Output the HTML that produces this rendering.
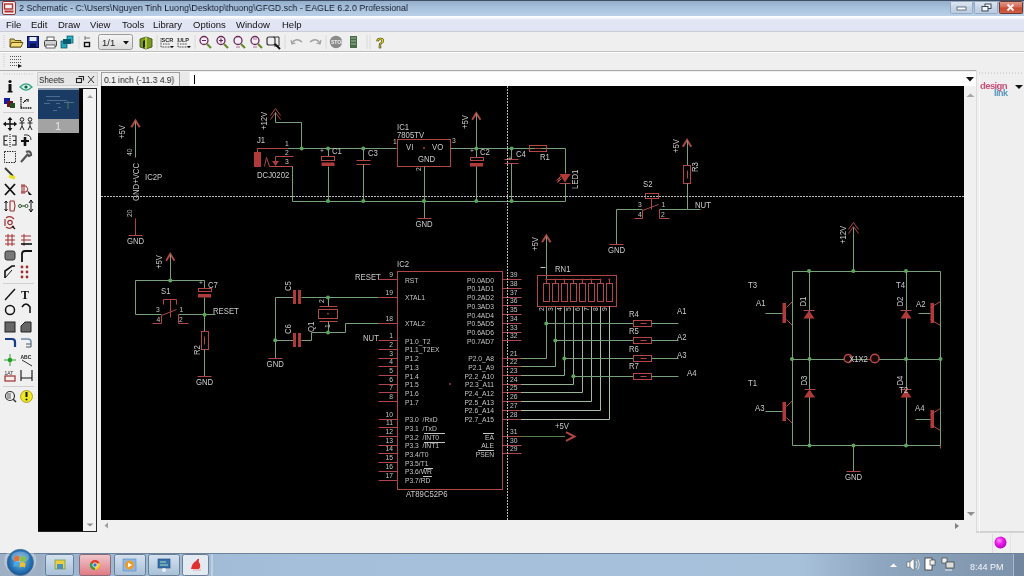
<!DOCTYPE html>
<html><head><meta charset="utf-8">
<style>
*{margin:0;padding:0;box-sizing:border-box}
html,body{width:1024px;height:576px;overflow:hidden;background:#f0f0f0;font-family:"Liberation Sans",sans-serif;position:relative}
.a{position:absolute;will-change:transform}
#title{left:0;top:0;width:1024px;height:16px;background:linear-gradient(#3e4e64 0px,#3e4e64 1px,#94aecb 1px,#a9c2dc 8px,#b8cfe7 16px);}
#title .t{left:19px;top:2px;font-size:9.5px;color:#101828;white-space:nowrap;transform:scaleX(0.93);transform-origin:0 0}
#menu{left:0;top:16px;width:1024px;height:16px;background:linear-gradient(#ffffff 0px,#f6f8fd 2px,#e2e6f4 4px,#dfe3f4 15px);border-bottom:1px solid #c8ccd4}
#menu span{position:absolute;top:3px;font-size:9.5px;color:#111}
#tb1{left:0;top:32px;width:1024px;height:20px;background:#efefef;border-bottom:1px solid #c0c0c0;box-shadow:0 1px 0 #fff}
#tb2{left:0;top:53px;width:1024px;height:18px;background:#efefef;border-bottom:1px solid #a8a8a8}
#sch{left:101px;top:86px;width:863px;height:434px;background:#000;overflow:hidden}
#task{left:0;top:553px;width:1024px;height:23px;background:linear-gradient(90deg,#8aa3bd 0px,#9bb5d0 40px,#a5bfda 300px,#a8c1db 800px,#8ea6bf 880px,#7e94ac 1010px);border-top:1px solid #6d839b}
</style></head><body>
<div id="title" class="a"><span class="a t">2 Schematic - C:\Users\Nguyen Tinh Luong\Desktop\thuong\GFGD.sch - EAGLE 6.2.0 Professional</span></div>
<div id="menu" class="a">
<span style="left:6px">File</span><span style="left:31px">Edit</span><span style="left:58px">Draw</span><span style="left:90px">View</span><span style="left:122px">Tools</span><span style="left:153px">Library</span><span style="left:193px">Options</span><span style="left:236px">Window</span><span style="left:282px">Help</span>
</div>
<div id="tb1" class="a"></div>
<div id="tb2" class="a"></div>

<!-- title buttons -->
<svg class="a" style="left:940px;top:0" width="84" height="16" viewBox="940 0 84 16">
<defs>
<linearGradient id="bt" x1="0" y1="0" x2="0" y2="1"><stop offset="0" stop-color="#dfe8f2"/><stop offset="0.5" stop-color="#c6d5e6"/><stop offset="1" stop-color="#b8cbe0"/></linearGradient>
<linearGradient id="cl" x1="0" y1="0" x2="0" y2="1"><stop offset="0" stop-color="#e4a090"/><stop offset="0.45" stop-color="#d46a55"/><stop offset="0.55" stop-color="#c84a32"/><stop offset="1" stop-color="#d06048"/></linearGradient>
</defs>
<rect x="950.5" y="1.5" width="22" height="12" rx="1" fill="url(#bt)" stroke="#98aac0"/>
<rect x="957" y="7" width="9" height="3" fill="#fff" stroke="#4a5666" stroke-width="0.8"/>
<rect x="974.5" y="1.5" width="23" height="12" rx="1" fill="url(#bt)" stroke="#98aac0"/>
<rect x="985" y="4" width="6" height="4.5" fill="#f4f8fc" stroke="#3a4656" stroke-width="1"/>
<rect x="982" y="6.5" width="6" height="4.5" fill="#f4f8fc" stroke="#3a4656" stroke-width="1"/>
<rect x="999.5" y="1.5" width="23" height="12" rx="1" fill="url(#cl)" stroke="#6a3a30"/>
<path d="M1007.5,4.5 L1013.5,10.5 M1013.5,4.5 L1007.5,10.5" stroke="#f8f0f0" stroke-width="2"/>
</svg>
<!-- app icon -->
<svg class="a" style="left:2px;top:1px" width="14" height="14" viewBox="0 0 14 14">
<rect x="0.5" y="0.5" width="13" height="13" rx="1.5" fill="#f4f0f0" stroke="#9a3030"/>
<rect x="2.5" y="3" width="8" height="5" fill="none" stroke="#b03030" stroke-width="1.4"/>
<rect x="2.5" y="9.5" width="9" height="2" fill="#b03030"/>
</svg>

<!-- toolbar 1 icons -->
<svg class="a" style="left:0;top:32px" width="400" height="20" viewBox="0 32 400 20">
<path d="M4,35 L4,49" stroke="#c8c8c8" stroke-dasharray="1,1"/>
<!-- folder -->
<path d="M10,39 L14,39 L15,40.5 L21,40.5 L21,47 L10,47 Z" fill="#e0c75a" stroke="#5a4a10" stroke-width="0.9"/>
<path d="M11.5,42.5 L23,42.5 L21,47 L10,47 Z" fill="#f2dd78" stroke="#5a4a10" stroke-width="0.9"/>
<!-- save -->
<rect x="27.5" y="36.5" width="11" height="11" fill="#1b2c9a" stroke="#0c1250"/>
<rect x="29.5" y="37" width="7" height="4" fill="#e8eef8"/>
<rect x="30" y="43.5" width="6" height="4" fill="#0c1250"/>
<!-- print -->
<rect x="44.5" y="40.5" width="12" height="6" rx="1" fill="#cfcfcf" stroke="#404040"/>
<rect x="47" y="37" width="7" height="3.5" fill="#fff" stroke="#404040" stroke-width="0.8"/>
<rect x="46" y="45" width="9" height="3" fill="#fff" stroke="#404040" stroke-width="0.8"/>
<!-- cyan -->
<rect x="61" y="41" width="6" height="7" fill="#20a8b8" stroke="#0a4a60" stroke-width="0.7"/>
<rect x="67" y="36" width="6" height="7" fill="#20b8c8" stroke="#0a4a60" stroke-width="0.7"/>
<rect x="63" y="39" width="8" height="5" fill="#0a5a70"/>
<path d="M79,36 L79,49" stroke="#d8d8d8"/>
<!-- small chip -->
<path d="M85,36 L85,40 M85,38 L90,38" stroke="#555" stroke-width="0.8"/>
<rect x="84.5" y="42.5" width="5" height="4" fill="none" stroke="#111" stroke-width="1.4"/>
<!-- dropdown 1/1 -->
<defs><linearGradient id="dd" x1="0" y1="0" x2="0" y2="1"><stop offset="0" stop-color="#f6f6f6"/><stop offset="1" stop-color="#dadada"/></linearGradient></defs><rect x="98.5" y="34.5" width="34" height="15" rx="2" fill="url(#dd)" stroke="#9a9a9a"/>
<text x="102" y="46" font-size="9.5" fill="#222" font-family="Liberation Sans">1/1</text>
<path d="M123,41 L129,41 L126,44.5 Z" fill="#111"/>
<!-- book -->
<path d="M140,39 L146,37 L152,39 L152,47 L146,49 L140,47 Z" fill="#7a9a20" stroke="#3a4a10" stroke-width="0.8"/>
<path d="M146,37 L146,49" stroke="#c8d840" stroke-width="1.5"/>
<path d="M143,41 L145,40 L145,47 L143,48 Z" fill="#222"/>
<path d="M157,35 L157,49" stroke="#d8d8d8"/>
<!-- SCR ULP -->
<g font-family="Liberation Sans" font-size="5.5" font-weight="bold" fill="#222">
<text x="161.5" y="41.5">SCR</text><text x="178" y="41.5">ULP</text></g>
<path d="M161,38 L161,47 L173,47 M163,44 L170,44 M178,38 L178,47 L190,47 M180,44 L187,44" stroke="#333" stroke-width="0.9" fill="none" stroke-dasharray="1,0.6"/>
<path d="M170,46 L174,46 L172,48 Z M187,46 L191,46 L189,48 Z" fill="#111"/>
<path d="M195,35 L195,49" stroke="#d8d8d8"/>
<!-- magnifiers -->
<g fill="#f4eef4" stroke="#6a2a5a" stroke-width="1.3">
<circle cx="204" cy="40.5" r="4"/><circle cx="221" cy="40.5" r="4"/><circle cx="238" cy="40.5" r="4"/><circle cx="255" cy="40.5" r="4"/>
</g>
<g stroke="#6a8a30" stroke-width="2.2">
<path d="M207,44 L211,48 M224,44 L228,48 M241,44 L245,48 M258,44 L262,48"/></g>
<path d="M202,40.5 L206,40.5 M219,40.5 L223,40.5 M221,38.5 L221,42.5" stroke="#6a2a5a" stroke-width="1.2"/>
<path d="M236,47 L240,47 M253,47 L257,47 M253,39 L257,39" stroke="#b070a0" stroke-width="1"/>
<rect x="267" y="37" width="8" height="8" rx="2" fill="#eee" stroke="#333" stroke-width="1.2"/>
<path d="M273,37 L279,37 L279,46 L274,46" fill="none" stroke="#333" stroke-width="1"/>
<path d="M275,44 L280,49" stroke="#111" stroke-width="2"/>
<path d="M285,35 L285,49" stroke="#d8d8d8"/>
<!-- undo redo -->
<path d="M292,43 Q296,37 302,42" fill="none" stroke="#a0a0a0" stroke-width="1.6"/>
<path d="M291,40 L292,44 L295.5,43" fill="none" stroke="#a0a0a0" stroke-width="1.2"/>
<path d="M320,43 Q316,37 310,42" fill="none" stroke="#a0a0a0" stroke-width="1.6"/>
<path d="M321,40 L320,44 L316.5,43" fill="none" stroke="#a0a0a0" stroke-width="1.2"/>
<path d="M326,35 L326,49" stroke="#d8d8d8"/>
<!-- stop -->
<circle cx="336" cy="42" r="6.2" fill="#8a8a8a"/>
<text x="331" y="44" font-size="5" fill="#eee" font-family="Liberation Sans" font-weight="bold">STOP</text>
<rect x="350" y="36" width="7" height="12" fill="#4a6a4a"/>
<path d="M351,38 L356,38 M351,41 L356,41 M351,44 L356,44" stroke="#9aba9a" stroke-width="1"/>
<path d="M367,35 L367,49 M370,35 L370,49" stroke="#d8d8d8"/>
<text x="376" y="48" font-size="14" font-weight="bold" fill="#e8e020" stroke="#202000" stroke-width="0.5" font-family="Liberation Sans">?</text>
</svg>
<!-- toolbar 2 -->
<svg class="a" style="left:0;top:52px" width="40" height="18" viewBox="0 52 40 18">
<path d="M4,54 L4,68" stroke="#c8c8c8" stroke-dasharray="1,1"/>
<g fill="#555"><path d="M10,56 h1v1h-1z M12,56 h1v1h-1z M14,56 h1v1h-1z M16,56 h1v1h-1z M18,56 h1v1h-1z M20,56 h1v1h-1z
M10,59 h1v1h-1z M12,59 h1v1h-1z M14,59 h1v1h-1z M16,59 h1v1h-1z M18,59 h1v1h-1z M20,59 h1v1h-1z
M10,62 h1v1h-1z M12,62 h1v1h-1z M14,62 h1v1h-1z M16,62 h1v1h-1z M18,62 h1v1h-1z M20,62 h1v1h-1z
M10,65 h1v1h-1z M12,65 h1v1h-1z M14,65 h1v1h-1z M16,65 h1v1h-1z M18,65 h1v1h-1z"/></g>
<path d="M18,64 L22,66 L18,68 Z" fill="#111"/>
</svg>


<!-- sheets panel -->
<div class="a" style="left:37px;top:72px;width:61px;height:14px;background:#e6e6e6;border:1px solid #d0d0d0"></div>
<span class="a" style="left:39px;top:74px;font-size:9.5px;color:#222;transform:scaleX(0.85);transform-origin:0 0">Sheets</span>
<div class="a" style="left:38px;top:88px;width:59px;height:444px;background:#000;border:1px solid #222;border-left:none"></div>
<div class="a" style="left:38px;top:88px;width:41px;height:31px;background:#1a3b63;border-top:2px solid #8a9aaa"></div>
<div class="a" style="left:38px;top:119px;width:41px;height:14px;background:#a3a3a3"></div>
<span class="a" style="left:55px;top:120px;font-size:11px;color:#e4e4e4">1</span>
<div class="a" style="left:83px;top:89px;width:13px;height:442px;background:#f2f2f2"></div>


<!-- left toolbar -->
<svg class="a" style="left:0;top:70px" width="37" height="340" viewBox="0 70 37 340">
<path d="M4,74 L34,74" stroke="#c4c4c4" stroke-dasharray="1,1.5"/>
<!-- r1 -->
<rect x="8.5" y="84" width="3" height="8" fill="#111"/><circle cx="10" cy="81.5" r="1.6" fill="#111"/><rect x="7.5" y="91" width="5" height="1.5" fill="#111"/>
<path d="M20,87 Q26,81 32,87 Q26,93 20,87 Z" fill="#d8f0e8" stroke="#30a080" stroke-width="1.2"/><circle cx="26" cy="87" r="1.6" fill="#106040"/>
<!-- r2 -->
<rect x="4" y="98" width="6" height="6" fill="#1a1aa0"/><rect x="7" y="101" width="6" height="6" fill="#6a1020"/><rect x="10" y="103" width="5" height="5" fill="#205020"/>
<path d="M21,97 L21,108 L32,108" fill="none" stroke="#111" stroke-width="1.4" stroke-dasharray="1.2,0.6"/>
<text x="24" y="104" font-size="6" fill="#111" font-family="Liberation Sans" font-weight="bold">⁶⁰</text>
<path d="M23,103 L27,99" stroke="#111"/>
<path d="M3,112.5 L34,112.5" stroke="#d0d0d0"/>
<!-- r3 move / group -->
<path d="M10,118 L10,130 M4,124 L16,124" stroke="#111" stroke-width="1.4"/>
<path d="M8,120 L10,117.5 L12,120 M8,128 L10,130.5 L12,128 M6,122 L3.5,124 L6,126 M14,122 L16.5,124 L14,126" fill="#111" stroke="#111" stroke-width="1"/>
<g stroke="#222" stroke-width="1" fill="none"><circle cx="22" cy="119.5" r="1.8"/><circle cx="30" cy="119.5" r="1.8"/>
<path d="M22,121.5 L22,126 M19.5,123 L24.5,123 M20,130 L22,126 L24,130 M30,121.5 L30,126 M27.5,123 L32.5,123 M28,130 L30,126 L32,130"/></g>
<!-- r4 mirror / rotate -->
<g stroke="#222" stroke-width="1.1" fill="none"><path d="M8,136 L4,136 L4,145 L8,145 M4,140.5 L7,140.5 M12,136 L16,136 L16,145 L12,145 M13,140.5 L16,140.5"/><path d="M10,134 L10,147" stroke-dasharray="1,1"/></g>
<path d="M25,137 L25,146" stroke="#111" stroke-width="2.6"/><path d="M21,141 L29,141" stroke="#111" stroke-width="2"/>
<path d="M24,135 Q31,134 31,140" fill="none" stroke="#333" stroke-width="1"/>
<!-- r5 group / wrench -->
<rect x="4.5" y="151.5" width="11" height="11" fill="none" stroke="#222" stroke-dasharray="1.5,1"/>
<path d="M21,162 L28,154 M26,152 Q31,150 31,155 L29,156 L27,154" fill="none" stroke="#555" stroke-width="2.2"/>
<!-- r6 pen -->
<path d="M5,168 L13,176" stroke="#333" stroke-width="1.8"/><path d="M9,176 L15,178" stroke="#e8e020" stroke-width="3"/>
<!-- r7 -->
<path d="M5,184 L15,195 M15,184 L5,195" stroke="#111" stroke-width="1.8"/>
<g stroke="#a03030" stroke-width="1" fill="none"><path d="M21,186 L26,186 L28,189 L26,192 L21,192 M22,184 L22,194 M24,184 L24,194"/></g>
<path d="M27,190 L32,195 L29,195 Z" fill="#111"/>
<!-- r8 -->
<path d="M6,201 L6,211 M4.5,203 L6,201 L7.5,203 M4.5,209 L6,211 L7.5,209" stroke="#111" stroke-width="1" fill="none"/>
<path d="M10,201 L14,201 L15,206 L14,211 L10,211 M10,201 L10,211" stroke="#a03030" stroke-width="1.1" fill="none"/>
<circle cx="20" cy="206" r="1.5" fill="none" stroke="#306030"/><path d="M21.5,206 L25,206" stroke="#333"/><circle cx="26.5" cy="206" r="1.5" fill="none" stroke="#306030"/><path d="M31,200 L31,212 M29,203 L31,200 L33,203 M29,209 L31,212 L33,209" stroke="#111" fill="none"/>
<!-- r9 -->
<g stroke="#a03030" stroke-width="1.2" fill="none"><path d="M6,218 Q10,215 14,219 M6,227 Q10,230 14,226 M5,219 L5,226"/><circle cx="10" cy="222.5" r="2.2"/></g>
<path d="M12,226 L15,229" stroke="#111" stroke-width="1.2"/>
<!-- r10 -->
<g stroke="#a03030" stroke-width="1" fill="none"><path d="M5,236 L15,236 M5,240 L15,240 M5,244 L15,244 M8,234 L8,246 M12,234 L12,246"/></g>
<g stroke="#a03030" stroke-width="1" fill="none"><path d="M21,236 L31,236 M21,240 L31,240 M24,234 L24,246"/></g><path d="M21,244 L32,244" stroke="#111" stroke-width="1.6"/>
<!-- r11 -->
<rect x="5" y="251" width="10" height="9" rx="2" fill="#777" stroke="#333"/>
<path d="M22,262 L22,254 Q22,251 25,251 L32,251" fill="none" stroke="#111" stroke-width="1.8"/>
<!-- r12 -->
<path d="M5,278 L5,271 L12,266 L15,266" fill="none" stroke="#111" stroke-width="1.6"/><path d="M5,278 L12,270" stroke="#111"/>
<g fill="#a03030"><circle cx="22" cy="267" r="1.4"/><circle cx="27" cy="267" r="1.4"/><circle cx="22" cy="272" r="1.4"/><circle cx="27" cy="272" r="1.4"/><circle cx="22" cy="277" r="1.4"/><circle cx="27" cy="277" r="1.4"/></g>
<path d="M3,283.5 L34,283.5" stroke="#d0d0d0"/>
<!-- r13 -->
<path d="M5,300 L15,289" stroke="#111" stroke-width="1.4"/>
<text x="21" y="299" font-size="12" font-family="Liberation Serif" fill="#111" font-weight="bold">T</text>
<!-- r14 -->
<circle cx="10" cy="310" r="4.5" fill="none" stroke="#111" stroke-width="1.5"/>
<path d="M22,307 Q26,301 30,307 L30,313" fill="none" stroke="#111" stroke-width="1.5"/>
<!-- r15 -->
<rect x="5" y="322" width="10" height="10" fill="#666" stroke="#222"/>
<path d="M21,332 L21,326 L25,322 L31,322 L31,332 Z" fill="#666" stroke="#222"/>
<!-- r16 -->
<path d="M5,339 L12,339 Q15,339 15,342 L15,347" fill="none" stroke="#1a3a8a" stroke-width="2.2"/>
<path d="M21,339 L28,339 Q31,339 31,342 L31,347" fill="none" stroke="#6a8aaa" stroke-width="1.5"/><path d="M26,344 L31,344 M26,347 L31,347" stroke="#555"/>
<!-- r17 -->
<path d="M4,360 L16,360 M10,354 L10,366" stroke="#30a030" stroke-width="1"/><circle cx="10" cy="360" r="2.3" fill="#20a020"/>
<text x="20.5" y="359" font-size="5" font-family="Liberation Sans" fill="#222" font-weight="bold">ABC</text><path d="M22,360 L32,366" stroke="#333"/>
<!-- r18 -->
<text x="4.5" y="375" font-size="5" font-family="Liberation Sans" fill="#333">1AT</text>
<rect x="5" y="376" width="10" height="5" fill="none" stroke="#a03030" stroke-width="1.2"/>
<path d="M21,370 L21,381 M32,370 L32,381 M21,378 L32,378" stroke="#111" stroke-width="1.1"/>
<path d="M3,386.5 L34,386.5" stroke="#d0d0d0"/>
<!-- r19 -->
<circle cx="10" cy="396" r="4.5" fill="#eee" stroke="#333" stroke-width="1.2"/><path d="M7,394 L11,394 M7,396 L11,396 M7,398 L11,398" stroke="#333" stroke-width="0.8"/><path d="M13,399 L16,402" stroke="#333" stroke-width="1.5"/>
<circle cx="26.5" cy="396.5" r="6" fill="#f0e820" stroke="#a09010" stroke-width="0.8"/><rect x="25.5" y="392" width="2" height="5" fill="#111"/><circle cx="26.5" cy="399.5" r="1" fill="#111"/>
</svg>

<!-- sheets header icons -->
<svg class="a" style="left:72px;top:72px" width="26" height="14" viewBox="72 72 26 14">
<rect x="76.5" y="78.5" width="5" height="4" fill="none" stroke="#222" stroke-width="1.1"/>
<path d="M78.5,76.5 L83.5,76.5 L83.5,80.5" fill="none" stroke="#222" stroke-width="1.1"/>
<path d="M88,76 L94,83 M94,76 L88,83" stroke="#333" stroke-width="1"/>
</svg>
<!-- sheet thumbnail content -->
<svg class="a" style="left:38px;top:90px" width="41" height="29" viewBox="0 0 41 29">
<g fill="#5a7a9a" opacity="0.8"><rect x="8" y="6" width="14" height="1"/><rect x="9" y="10" width="20" height="1"/><rect x="6" y="13" width="6" height="1"/><rect x="18" y="13" width="4" height="1"/><rect x="26" y="12" width="10" height="1"/><rect x="20" y="17" width="3" height="1"/><rect x="15" y="20" width="4" height="1"/></g>
<path d="M30,11 L30,19" stroke="#3a8a5a"/>
</svg>
<!-- sheets scrollbar arrows -->
<svg class="a" style="left:83px;top:88px" width="14" height="445" viewBox="83 88 14 445">
<path d="M87,98 L90,95 L93,98 Z" fill="#a0a0a0"/>
<path d="M86.5,523.5 L90,526.5 L93.5,523.5 Z" fill="#909090"/>
</svg>

<!-- status/command line -->
<div class="a" style="left:101px;top:72px;width:78px;height:14px;background:#f0f0f0;border-top:1px solid #a0a0a0;border-left:1px solid #a0a0a0"></div>
<span class="a" style="left:104px;top:74px;font-size:9.5px;color:#222;white-space:nowrap;transform:scaleX(0.89);transform-origin:0 0">0.1 inch (-11.3 4.9)</span>
<div class="a" style="left:179px;top:72px;width:10px;height:14px;background:#eaeaea;border-left:1px solid #a0a0a0"></div>
<div class="a" style="left:190px;top:72px;width:786px;height:14px;background:#fff"></div>
<div class="a" style="left:194px;top:75px;width:1px;height:9px;background:#000"></div>

<div id="sch" class="a"></div>

<svg class="a" style="left:0;top:0;will-change:transform" width="1024" height="576" viewBox="0 0 1024 576">
<defs><clipPath id="cp"><rect x="101" y="86" width="863" height="434"/></clipPath></defs>
<style>
.g{stroke:#78a078;stroke-width:1;fill:none}
.r{stroke:#b04646;stroke-width:1;fill:none}
.rf{fill:#b03a3a}
.t2{stroke:#c8c8c8;stroke-width:1;fill:none}
.gf{fill:#5aa85a}
.t{fill:#cacaca;font-size:8.6px;font-family:"Liberation Sans",sans-serif}
.ts{fill:#c4c4c4;font-size:7.5px;font-family:"Liberation Sans",sans-serif}
</style>
<g clip-path="url(#cp)">
<!--S-->
<path d="M131.3,127.2 L135.5,120.5 L139.7,127.2" fill="none" stroke="#b04646" stroke-width="2"/>
<path class="g" d="M135.5,121.5 L135.5,157.5"/>
<text class="t" transform="translate(125 139) rotate(-90) scale(0.9 1)">+5V</text>
<text class="ts" transform="translate(132 156) rotate(-90) scale(0.9 1)">40</text>
<text class="t" transform="translate(138.5 201) rotate(-90) scale(0.9 1)">GND+VCC</text>
<text class="t" transform="translate(145 180) scale(0.9 1)">IC2P</text>
<text class="ts" transform="translate(132 217) rotate(-90) scale(0.9 1)">20</text>
<path class="r" d="M135.5,218.5 L135.5,235.5"/>
<path class="r" d="M128.5,235.5 L142.5,235.5" stroke-width="2"/>
<text class="t" transform="translate(135.5 244) scale(0.9 1)" text-anchor="middle">GND</text>
<path class="r" d="M270.5,115.5 L275.5,108.5 L280.5,115.5" stroke-width="1.8"/>
<path class="r" d="M270.5,119.5 L275.5,112.5 L280.5,119.5" stroke-width="1.8"/>
<text class="t" transform="translate(267 130) rotate(-90) scale(0.9 1)">+12V</text>
<path class="g" d="M275.5,112.5 L275.5,122.5 L301.5,122.5 L301.5,148.5"/>
<text class="t" transform="translate(257 143) scale(0.9 1)">J1</text>
<rect class="rf" x="254" y="152" width="7" height="15"/>
<path class="r" d="M257.5,152.5 L257.5,148.5 L287.5,148.5"/>
<path class="g" d="M287.5,148.5 L396.5,148.5"/>
<circle class="gf" cx="301.7" cy="148.5" r="2"/>
<path class="r" d="M275.5,165.5 L275.5,156.5 L293.5,156.5"/>
<path class="rf" d="M272,161 L279,161 L275.6,166 Z"/>
<path class="r" d="M264.5,166.5 L266.5,157.5 L269.5,166.5"/>
<path class="r" d="M269.5,166.5 L292.5,166.5"/>
<path class="g" d="M292.5,166.5 L292.5,201.5 L565.5,201.5"/>
<text class="ts" transform="translate(285 146) scale(0.9 1)">1</text>
<text class="ts" transform="translate(285 155) scale(0.9 1)">2</text>
<text class="ts" transform="translate(285 164) scale(0.9 1)">3</text>
<text class="t" transform="translate(257 178) scale(0.9 1)">DCJ0202</text>
<circle class="gf" cx="328" cy="148.5" r="2"/>
<path class="g" d="M328.5,148.5 L328.5,156.5"/>
<rect class="r" x="321.5" y="156.5" width="13.0" height="4.0"/>
<rect class="rf" x="321.5" y="162.5" width="13" height="3.5"/>
<path class="g" d="M328.5,166.5 L328.5,201.5"/>
<circle class="gf" cx="328" cy="201" r="2"/>
<text class="ts" transform="translate(320 153) scale(0.9 1)">+</text>
<text class="t" transform="translate(332 154) scale(0.9 1)">C1</text>
<circle class="gf" cx="363.3" cy="148.5" r="2"/>
<path class="g" d="M363.5,148.5 L363.5,160.5"/>
<path class="r" d="M356.5,160.5 L370.5,160.5" stroke-width="1.8"/>
<path class="r" d="M356.5,164.5 L370.5,164.5" stroke-width="1.8"/>
<path class="g" d="M363.5,164.5 L363.5,201.5"/>
<circle class="gf" cx="363.3" cy="201" r="2"/>
<text class="t" transform="translate(368 156) scale(0.9 1)">C3</text>
<rect class="r" x="397.5" y="139.5" width="53.0" height="27.0"/>
<text class="t" transform="translate(397 130) scale(0.9 1)">IC1</text>
<text class="t" transform="translate(397 137.5) scale(0.9 1)">7805TV</text>
<text class="t" transform="translate(406 150) scale(0.9 1)">VI</text>
<text class="t" transform="translate(432 150) scale(0.9 1)">VO</text>
<text class="t" transform="translate(418 162) scale(0.9 1)">GND</text>
<circle class="rf" cx="424" cy="148" r="1"/>
<text class="ts" transform="translate(393 144) scale(0.9 1)">1</text>
<text class="ts" transform="translate(452 143) scale(0.9 1)">3</text>
<path class="g" d="M424.5,166.5 L424.5,218.5"/>
<circle class="gf" cx="424" cy="201" r="2"/>
<path class="r" d="M417.5,218.5 L431.5,218.5" stroke-width="2"/>
<text class="t" transform="translate(424 227) scale(0.9 1)" text-anchor="middle">GND</text>
<text class="ts" transform="translate(421 171) rotate(-90) scale(0.9 1)">2</text>
<path class="g" d="M450.5,148.5 L565.5,148.5"/>
<path d="M472.1,119.8 L476.3,113.1 L480.5,119.8" fill="none" stroke="#b04646" stroke-width="2"/>
<path class="g" d="M476.5,113.5 L476.5,148.5"/>
<text class="t" transform="translate(468 129) rotate(-90) scale(0.9 1)">+5V</text>
<circle class="gf" cx="476.3" cy="148.5" r="2"/>
<path class="g" d="M476.5,148.5 L476.5,157.5"/>
<rect class="r" x="470.5" y="157.5" width="13.0" height="3.0"/>
<rect class="rf" x="470" y="163" width="13" height="3.5"/>
<path class="g" d="M476.5,166.5 L476.5,201.5"/>
<circle class="gf" cx="476.3" cy="201" r="2"/>
<text class="ts" transform="translate(470 153) scale(0.9 1)">+</text>
<text class="t" transform="translate(480 155) scale(0.9 1)">C2</text>
<circle class="gf" cx="511.6" cy="148.5" r="2"/>
<path class="g" d="M511.5,148.5 L511.5,159.5"/>
<path class="r" d="M504.5,159.5 L518.5,159.5" stroke-width="1.8"/>
<path class="r" d="M504.5,163.5 L518.5,163.5" stroke-width="1.8"/>
<path class="g" d="M511.5,163.5 L511.5,201.5"/>
<circle class="gf" cx="511.6" cy="201" r="2"/>
<text class="ts" transform="translate(508 161) scale(0.9 1)">+</text>
<text class="t" transform="translate(516 157) scale(0.9 1)">C4</text>
<rect class="r" x="529.5" y="145.5" width="17.0" height="6.0"/>
<path class="r" d="M534.5,148.5 L541.5,148.5"/>
<text class="t" transform="translate(540 160) scale(0.9 1)">R1</text>
<path class="g" d="M565.5,148.5 L565.5,173.5"/>
<path class="rf" d="M559.5,174 L570.5,174 L565,182.5 Z"/>
<path class="r" d="M559.5,183.5 L570.5,183.5" stroke-width="1.4"/>
<path class="g" d="M565.5,183.5 L565.5,201.5"/>
<path class="r" d="M556.5,180.5 L560.5,176.5 L557.5,182.5 L561.5,178.5"/>
<text class="t" transform="translate(578 189) rotate(-90) scale(0.9 1)">LED1</text>
<path d="M682.8,146.7 L687,140.0 L691.2,146.7" fill="none" stroke="#b04646" stroke-width="2"/>
<text class="t" transform="translate(679 153) rotate(-90) scale(0.9 1)">+5V</text>
<path class="g" d="M687.5,140.5 L687.5,165.5"/>
<rect class="r" x="683.5" y="165.5" width="7.0" height="18.0"/>
<path class="r" d="M687.5,170.5 L687.5,178.5"/>
<text class="t" transform="translate(698 172) rotate(-90) scale(0.9 1)">R3</text>
<path class="g" d="M687.5,183.5 L687.5,209.5"/>
<text class="t" transform="translate(643 187) scale(0.9 1)">S2</text>
<rect class="r" x="645.5" y="193.5" width="13.0" height="5.0"/>
<path class="r" d="M651.5,198.5 L651.5,209.5"/>
<path class="g" d="M616.5,209.5 L642.5,209.5"/>
<path class="r" d="M642.5,210.5 L658.5,204.5"/>
<path class="g" d="M659.5,209.5 L687.5,209.5 L700.5,209.5"/>
<text class="ts" transform="translate(638 207) scale(0.9 1)">3</text>
<text class="ts" transform="translate(661.5 207) scale(0.9 1)">1</text>
<text class="ts" transform="translate(638 217) scale(0.9 1)">4</text>
<text class="ts" transform="translate(661 217) scale(0.9 1)">2</text>
<path class="r" d="M642.5,210.5 L642.5,218.5 L634.5,218.5"/>
<path class="r" d="M659.5,209.5 L659.5,218.5 L669.5,218.5"/>
<text class="t" transform="translate(695 208) scale(0.9 1)">NUT</text>
<path class="g" d="M616.5,209.5 L616.5,244.5"/>
<path class="r" d="M609.5,244.5 L623.5,244.5" stroke-width="2"/>
<text class="t" transform="translate(616.6 253) scale(0.9 1)" text-anchor="middle">GND</text>
<path d="M166.10000000000002,260.7 L170.3,254.0 L174.5,260.7" fill="none" stroke="#b04646" stroke-width="2"/>
<text class="t" transform="translate(162 269) rotate(-90) scale(0.9 1)">+5V</text>
<path class="g" d="M170.5,254.5 L170.5,280.5"/>
<circle class="gf" cx="170.3" cy="280.4" r="2"/>
<path class="g" d="M135.5,280.5 L204.5,280.5"/>
<path class="g" d="M135.5,280.5 L135.5,314.5 L161.5,314.5"/>
<path class="r" d="M161.5,315.5 L176.5,309.5"/>
<path class="g" d="M178.5,314.5 L204.5,314.5 L215.5,314.5"/>
<path class="r" d="M163.5,304.5 L163.5,299.5 L176.5,299.5 L176.5,304.5"/>
<path class="r" d="M170.5,299.5 L170.5,317.5"/>
<text class="t" transform="translate(161 294) scale(0.9 1)">S1</text>
<text class="ts" transform="translate(156 312) scale(0.9 1)">3</text>
<text class="ts" transform="translate(179.5 312) scale(0.9 1)">1</text>
<text class="ts" transform="translate(156.5 322) scale(0.9 1)">4</text>
<text class="ts" transform="translate(179 322) scale(0.9 1)">2</text>
<path class="r" d="M161.5,315.5 L161.5,323.5 L152.5,323.5"/>
<path class="r" d="M178.5,314.5 L178.5,323.5 L188.5,323.5"/>
<path class="g" d="M204.5,280.5 L204.5,288.5"/>
<rect class="r" x="198.5" y="288.5" width="13.0" height="3.0"/>
<rect class="rf" x="198" y="294" width="13" height="3.5"/>
<path class="g" d="M204.5,297.5 L204.5,331.5"/>
<text class="ts" transform="translate(199 285) scale(0.9 1)">+</text>
<text class="t" transform="translate(208 288) scale(0.9 1)">C7</text>
<circle class="gf" cx="204.6" cy="314.7" r="2"/>
<text class="t" transform="translate(213 314) scale(0.9 1)">RESET</text>
<rect class="r" x="201.5" y="331.5" width="7.0" height="18.0"/>
<path class="r" d="M204.5,336.5 L204.5,344.5"/>
<text class="t" transform="translate(200 355) rotate(-90) scale(0.9 1)">R2</text>
<path class="g" d="M204.5,349.5 L204.5,376.5"/>
<path class="r" d="M197.5,376.5 L211.5,376.5" stroke-width="2"/>
<text class="t" transform="translate(204.6 385) scale(0.9 1)" text-anchor="middle">GND</text>
<path class="g" d="M275.5,297.5 L293.5,297.5"/>
<rect class="rf" x="293" y="290" width="3" height="14"/>
<rect class="rf" x="298" y="290" width="3" height="14"/>
<path class="g" d="M301.5,297.5 L378.5,297.5"/>
<circle class="gf" cx="328" cy="297.5" r="2"/>
<text class="t" transform="translate(291 291) rotate(-90) scale(0.9 1)">C5</text>
<path class="g" d="M328.5,297.5 L328.5,306.5"/>
<path class="r" d="M319.5,306.5 L337.5,306.5"/>
<rect class="r" x="318.5" y="309.5" width="19.0" height="9.0"/>
<path class="r" d="M319.5,321.5 L337.5,321.5"/>
<path class="g" d="M328.5,321.5 L328.5,332.5"/>
<circle class="rf" cx="328" cy="313.7" r="0.9"/>
<text class="ts" transform="translate(324 303) rotate(-90) scale(0.9 1)">2</text>
<text class="ts" transform="translate(330 328) rotate(-90) scale(0.9 1)">1</text>
<path class="g" d="M378.5,323.5 L345.5,323.5 L345.5,332.5 L311.5,332.5 L311.5,340.5"/>
<circle class="gf" cx="328" cy="332.5" r="2"/>
<text class="t" transform="translate(314 332) rotate(-90) scale(0.9 1)">Q1</text>
<path class="g" d="M275.5,297.5 L275.5,358.5"/>
<circle class="gf" cx="275.2" cy="340.2" r="2"/>
<path class="g" d="M275.5,340.5 L293.5,340.5"/>
<rect class="rf" x="293" y="333" width="3" height="14"/>
<rect class="rf" x="298" y="333" width="3" height="14"/>
<path class="g" d="M301.5,340.5 L311.5,340.5"/>
<text class="t" transform="translate(291 334) rotate(-90) scale(0.9 1)">C6</text>
<path class="r" d="M268.5,358.5 L282.5,358.5" stroke-width="2"/>
<text class="t" transform="translate(275.2 367) scale(0.9 1)" text-anchor="middle">GND</text>
<text class="t" transform="translate(355 280) scale(0.9 1)">RESET</text>
<text class="t" transform="translate(363 341) scale(0.9 1)">NUT</text>
<rect class="r" x="397.5" y="271.5" width="105.0" height="218.0"/>
<text class="t" transform="translate(397 267) scale(0.9 1)">IC2</text>
<text class="t" transform="translate(406 497) scale(0.9 1)">AT89C52P6</text>
<path class="r" d="M378.5,279.5 L397.5,279.5"/>
<text class="ts" transform="translate(393 277.2) scale(0.9 1)" text-anchor="end">9</text>
<text class="ts" transform="translate(405 282.7) scale(0.9 1)">RST</text>
<path class="r" d="M378.5,297.5 L397.5,297.5"/>
<text class="ts" transform="translate(393 294.6) scale(0.9 1)" text-anchor="end">19</text>
<text class="ts" transform="translate(405 300.1) scale(0.9 1)">XTAL1</text>
<path class="r" d="M378.5,323.5 L397.5,323.5"/>
<text class="ts" transform="translate(393 320.7) scale(0.9 1)" text-anchor="end">18</text>
<text class="ts" transform="translate(405 326.2) scale(0.9 1)">XTAL2</text>
<path class="r" d="M378.5,340.5 L397.5,340.5"/>
<text class="ts" transform="translate(393 338.2) scale(0.9 1)" text-anchor="end">1</text>
<text class="ts" transform="translate(405 343.7) scale(0.9 1)">P1.0_T2</text>
<path class="r" d="M378.5,349.5 L397.5,349.5"/>
<text class="ts" transform="translate(393 346.9) scale(0.9 1)" text-anchor="end">2</text>
<text class="ts" transform="translate(405 352.4) scale(0.9 1)">P1.1_T2EX</text>
<path class="r" d="M378.5,358.5 L397.5,358.5"/>
<text class="ts" transform="translate(393 355.6) scale(0.9 1)" text-anchor="end">3</text>
<text class="ts" transform="translate(405 361.1) scale(0.9 1)">P1.2</text>
<path class="r" d="M378.5,366.5 L397.5,366.5"/>
<text class="ts" transform="translate(393 364.3) scale(0.9 1)" text-anchor="end">4</text>
<text class="ts" transform="translate(405 369.8) scale(0.9 1)">P1.3</text>
<path class="r" d="M378.5,375.5 L397.5,375.5"/>
<text class="ts" transform="translate(393 373.0) scale(0.9 1)" text-anchor="end">5</text>
<text class="ts" transform="translate(405 378.5) scale(0.9 1)">P1.4</text>
<path class="r" d="M378.5,384.5 L397.5,384.5"/>
<text class="ts" transform="translate(393 381.7) scale(0.9 1)" text-anchor="end">6</text>
<text class="ts" transform="translate(405 387.2) scale(0.9 1)">P1.5</text>
<path class="r" d="M378.5,392.5 L397.5,392.5"/>
<text class="ts" transform="translate(393 390.4) scale(0.9 1)" text-anchor="end">7</text>
<text class="ts" transform="translate(405 395.9) scale(0.9 1)">P1.6</text>
<path class="r" d="M378.5,401.5 L397.5,401.5"/>
<text class="ts" transform="translate(393 399.1) scale(0.9 1)" text-anchor="end">8</text>
<text class="ts" transform="translate(405 404.6) scale(0.9 1)">P1.7</text>
<path class="r" d="M378.5,419.5 L397.5,419.5"/>
<text class="ts" transform="translate(393 416.6) scale(0.9 1)" text-anchor="end">10</text>
<text class="ts" transform="translate(405 422.1) scale(0.9 1)">P3.0&#160;&#160;/RxD</text>
<path class="r" d="M378.5,427.5 L397.5,427.5"/>
<text class="ts" transform="translate(393 425.3) scale(0.9 1)" text-anchor="end">11</text>
<text class="ts" transform="translate(405 430.8) scale(0.9 1)">P3.1&#160;&#160;/TxD</text>
<path class="r" d="M378.5,436.5 L397.5,436.5"/>
<text class="ts" transform="translate(393 434.0) scale(0.9 1)" text-anchor="end">12</text>
<text class="ts" transform="translate(405 439.5) scale(0.9 1)">P3.2&#160;&#160;/INT0</text>
<path class="r" d="M378.5,445.5 L397.5,445.5"/>
<text class="ts" transform="translate(393 442.7) scale(0.9 1)" text-anchor="end">13</text>
<text class="ts" transform="translate(405 448.2) scale(0.9 1)">P3.3&#160;&#160;/INT1</text>
<path class="r" d="M378.5,453.5 L397.5,453.5"/>
<text class="ts" transform="translate(393 451.4) scale(0.9 1)" text-anchor="end">14</text>
<text class="ts" transform="translate(405 456.9) scale(0.9 1)">P3.4/T0</text>
<path class="r" d="M378.5,462.5 L397.5,462.5"/>
<text class="ts" transform="translate(393 460.1) scale(0.9 1)" text-anchor="end">15</text>
<text class="ts" transform="translate(405 465.6) scale(0.9 1)">P3.5/T1</text>
<path class="r" d="M378.5,471.5 L397.5,471.5"/>
<text class="ts" transform="translate(393 468.8) scale(0.9 1)" text-anchor="end">16</text>
<text class="ts" transform="translate(405 474.3) scale(0.9 1)">P3.6/WR</text>
<path class="r" d="M378.5,480.5 L397.5,480.5"/>
<text class="ts" transform="translate(393 477.5) scale(0.9 1)" text-anchor="end">17</text>
<text class="ts" transform="translate(405 483.0) scale(0.9 1)">P3.7/RD</text>
<path class="r" d="M502.5,279.5 L521.5,279.5"/>
<text class="ts" transform="translate(510 277.2) scale(0.9 1)">39</text>
<text class="ts" transform="translate(494 282.7) scale(0.9 1)" text-anchor="end">P0.0AD0</text>
<path class="r" d="M502.5,288.5 L521.5,288.5"/>
<text class="ts" transform="translate(510 285.9) scale(0.9 1)">38</text>
<text class="ts" transform="translate(494 291.4) scale(0.9 1)" text-anchor="end">P0.1AD1</text>
<path class="r" d="M502.5,297.5 L521.5,297.5"/>
<text class="ts" transform="translate(510 294.6) scale(0.9 1)">37</text>
<text class="ts" transform="translate(494 300.1) scale(0.9 1)" text-anchor="end">P0.2AD2</text>
<path class="r" d="M502.5,305.5 L521.5,305.5"/>
<text class="ts" transform="translate(510 303.3) scale(0.9 1)">36</text>
<text class="ts" transform="translate(494 308.8) scale(0.9 1)" text-anchor="end">P0.3AD3</text>
<path class="r" d="M502.5,314.5 L521.5,314.5"/>
<text class="ts" transform="translate(510 312.0) scale(0.9 1)">35</text>
<text class="ts" transform="translate(494 317.5) scale(0.9 1)" text-anchor="end">P0.4AD4</text>
<path class="r" d="M502.5,323.5 L521.5,323.5"/>
<text class="ts" transform="translate(510 320.7) scale(0.9 1)">34</text>
<text class="ts" transform="translate(494 326.2) scale(0.9 1)" text-anchor="end">P0.5AD5</text>
<path class="r" d="M502.5,332.5 L521.5,332.5"/>
<text class="ts" transform="translate(510 329.5) scale(0.9 1)">33</text>
<text class="ts" transform="translate(494 335.0) scale(0.9 1)" text-anchor="end">P0.6AD6</text>
<path class="r" d="M502.5,340.5 L521.5,340.5"/>
<text class="ts" transform="translate(510 338.2) scale(0.9 1)">32</text>
<text class="ts" transform="translate(494 343.7) scale(0.9 1)" text-anchor="end">P0.7AD7</text>
<path class="r" d="M502.5,358.5 L521.5,358.5"/>
<text class="ts" transform="translate(510 355.6) scale(0.9 1)">21</text>
<text class="ts" transform="translate(494 361.1) scale(0.9 1)" text-anchor="end">P2.0_A8</text>
<path class="r" d="M502.5,366.5 L521.5,366.5"/>
<text class="ts" transform="translate(510 364.3) scale(0.9 1)">22</text>
<text class="ts" transform="translate(494 369.8) scale(0.9 1)" text-anchor="end">P2.1_A9</text>
<path class="r" d="M502.5,375.5 L521.5,375.5"/>
<text class="ts" transform="translate(510 373.0) scale(0.9 1)">23</text>
<text class="ts" transform="translate(494 378.5) scale(0.9 1)" text-anchor="end">P2.2_A10</text>
<path class="r" d="M502.5,384.5 L521.5,384.5"/>
<text class="ts" transform="translate(510 381.7) scale(0.9 1)">24</text>
<text class="ts" transform="translate(494 387.2) scale(0.9 1)" text-anchor="end">P2.3_A11</text>
<path class="r" d="M502.5,392.5 L521.5,392.5"/>
<text class="ts" transform="translate(510 390.4) scale(0.9 1)">25</text>
<text class="ts" transform="translate(494 395.9) scale(0.9 1)" text-anchor="end">P2.4_A12</text>
<path class="r" d="M502.5,401.5 L521.5,401.5"/>
<text class="ts" transform="translate(510 399.1) scale(0.9 1)">26</text>
<text class="ts" transform="translate(494 404.6) scale(0.9 1)" text-anchor="end">P2.5_A13</text>
<path class="r" d="M502.5,410.5 L521.5,410.5"/>
<text class="ts" transform="translate(510 407.9) scale(0.9 1)">27</text>
<text class="ts" transform="translate(494 413.4) scale(0.9 1)" text-anchor="end">P2.6_A14</text>
<path class="r" d="M502.5,419.5 L521.5,419.5"/>
<text class="ts" transform="translate(510 416.6) scale(0.9 1)">28</text>
<text class="ts" transform="translate(494 422.1) scale(0.9 1)" text-anchor="end">P2.7_A15</text>
<path class="r" d="M502.5,436.5 L521.5,436.5"/>
<text class="ts" transform="translate(510 434.0) scale(0.9 1)">31</text>
<text class="ts" transform="translate(494 439.5) scale(0.9 1)" text-anchor="end">EA</text>
<path class="r" d="M502.5,445.5 L521.5,445.5"/>
<text class="ts" transform="translate(510 442.7) scale(0.9 1)">30</text>
<text class="ts" transform="translate(494 448.2) scale(0.9 1)" text-anchor="end">ALE</text>
<path class="r" d="M502.5,453.5 L521.5,453.5"/>
<text class="ts" transform="translate(510 451.4) scale(0.9 1)">29</text>
<text class="ts" transform="translate(494 456.9) scale(0.9 1)" text-anchor="end">PSEN</text>
<circle class="rf" cx="450" cy="384" r="0.9"/>
<path d="M424,433.5 L445,433.5" stroke="#c4c4c4" stroke-width="1"/>
<path d="M424,442.5 L445,442.5" stroke="#c4c4c4" stroke-width="1"/>
<path d="M424,468.5 L433,468.5" stroke="#c4c4c4" stroke-width="1"/>
<path d="M423,476.5 L432,476.5" stroke="#c4c4c4" stroke-width="1"/>
<path d="M483,433.5 L494,433.5" stroke="#c4c4c4" stroke-width="1"/>
<path d="M478,450.5 L494,450.5" stroke="#c4c4c4" stroke-width="1"/>
<path d="M542.0999999999999,242.2 L546.3,235.5 L550.5,242.2" fill="none" stroke="#b04646" stroke-width="2"/>
<text class="t" transform="translate(538 251) rotate(-90) scale(0.9 1)">+5V</text>
<path class="g" d="M546.5,236.5 L546.5,275.5"/>
<path class="t2" d="M540.5,267.5 L545.5,267.5"/>
<text class="t" transform="translate(555 272) scale(0.9 1)">RN1</text>
<path class="g" d="M546.5,275.5 L546.5,279.5"/>
<path class="r" d="M546.5,279.5 L600.5,279.5"/>
<rect class="r" x="537.5" y="275.5" width="79.0" height="31.0"/>
<rect class="r" x="543.5" y="283.5" width="6.0" height="18.0"/>
<path class="r" d="M546.5,279.5 L546.5,283.5"/>
<circle class="rf" cx="546.3" cy="279.5" r="1"/>
<text class="ts" transform="translate(544.3 311) rotate(-90) scale(0.9 1)">2</text>
<rect class="r" x="552.5" y="283.5" width="6.0" height="18.0"/>
<path class="r" d="M555.5,279.5 L555.5,283.5"/>
<circle class="rf" cx="555.3" cy="279.5" r="1"/>
<text class="ts" transform="translate(553.3 311) rotate(-90) scale(0.9 1)">3</text>
<rect class="r" x="561.5" y="283.5" width="6.0" height="18.0"/>
<path class="r" d="M564.5,279.5 L564.5,283.5"/>
<circle class="rf" cx="564.3" cy="279.5" r="1"/>
<text class="ts" transform="translate(562.3 311) rotate(-90) scale(0.9 1)">4</text>
<rect class="r" x="570.5" y="283.5" width="6.0" height="18.0"/>
<path class="r" d="M573.5,279.5 L573.5,283.5"/>
<circle class="rf" cx="573.4" cy="279.5" r="1"/>
<text class="ts" transform="translate(571.4 311) rotate(-90) scale(0.9 1)">5</text>
<rect class="r" x="579.5" y="283.5" width="6.0" height="18.0"/>
<path class="r" d="M582.5,279.5 L582.5,283.5"/>
<circle class="rf" cx="582.4" cy="279.5" r="1"/>
<text class="ts" transform="translate(580.4 311) rotate(-90) scale(0.9 1)">6</text>
<rect class="r" x="588.5" y="283.5" width="6.0" height="18.0"/>
<path class="r" d="M591.5,279.5 L591.5,283.5"/>
<circle class="rf" cx="591.4" cy="279.5" r="1"/>
<text class="ts" transform="translate(589.4 311) rotate(-90) scale(0.9 1)">7</text>
<rect class="r" x="597.5" y="283.5" width="6.0" height="18.0"/>
<path class="r" d="M600.5,279.5 L600.5,283.5"/>
<circle class="rf" cx="600.4" cy="279.5" r="1"/>
<text class="ts" transform="translate(598.4 311) rotate(-90) scale(0.9 1)">8</text>
<rect class="r" x="606.5" y="283.5" width="6.0" height="18.0"/>
<path class="r" d="M609.5,279.5 L609.5,283.5"/>
<circle class="rf" cx="609.4" cy="279.5" r="1"/>
<text class="ts" transform="translate(607.4 311) rotate(-90) scale(0.9 1)">9</text>
<path d="M521,358.5 L546.5,358.5 L546.5,306.5" fill="none" stroke="#78a078"/>
<path d="M521,366.5 L555.5,366.5 L555.5,306.5" fill="none" stroke="#80a880"/>
<path d="M521,375.5 L564.5,375.5 L564.5,306.5" fill="none" stroke="#88ac88"/>
<path d="M521,384.5 L573.5,384.5 L573.5,306.5" fill="none" stroke="#90b090"/>
<path d="M521,392.5 L582.5,392.5 L582.5,306.5" fill="none" stroke="#98b898"/>
<path d="M521,401.5 L591.5,401.5 L591.5,306.5" fill="none" stroke="#a0b8a0"/>
<path d="M521,410.5 L600.5,410.5 L600.5,306.5" fill="none" stroke="#a8bca8"/>
<path d="M521,419.5 L609.5,419.5 L609.5,306.5" fill="none" stroke="#b0c0b0"/>
<circle class="gf" cx="546.3" cy="323.5" r="2"/>
<path class="g" d="M546.5,323.5 L633.5,323.5"/>
<rect class="r" x="633.5" y="320.5" width="18.0" height="6.0"/>
<path class="r" d="M640.5,323.5 L646.5,323.5"/>
<path class="g" d="M651.5,323.5 L678.5,323.5"/>
<text class="t" transform="translate(629 316.5) scale(0.9 1)">R4</text>
<circle class="gf" cx="555.3" cy="340.6" r="2"/>
<path class="g" d="M555.5,340.5 L633.5,340.5"/>
<rect class="r" x="633.5" y="337.5" width="18.0" height="6.0"/>
<path class="r" d="M640.5,340.5 L646.5,340.5"/>
<path class="g" d="M651.5,340.5 L678.5,340.5"/>
<text class="t" transform="translate(629 333.6) scale(0.9 1)">R5</text>
<circle class="gf" cx="564.3" cy="358.6" r="2"/>
<path class="g" d="M564.5,358.5 L633.5,358.5"/>
<rect class="r" x="633.5" y="355.5" width="18.0" height="6.0"/>
<path class="r" d="M640.5,358.5 L646.5,358.5"/>
<path class="g" d="M651.5,358.5 L678.5,358.5"/>
<text class="t" transform="translate(629 351.6) scale(0.9 1)">R6</text>
<circle class="gf" cx="573.4" cy="376.2" r="2"/>
<path class="g" d="M573.5,376.5 L633.5,376.5"/>
<rect class="r" x="633.5" y="373.5" width="18.0" height="6.0"/>
<path class="r" d="M640.5,376.5 L646.5,376.5"/>
<path class="g" d="M651.5,376.5 L678.5,376.5"/>
<text class="t" transform="translate(629 369.2) scale(0.9 1)">R7</text>
<text class="t" transform="translate(677 314) scale(0.9 1)">A1</text>
<text class="t" transform="translate(677 340) scale(0.9 1)">A2</text>
<text class="t" transform="translate(677 358) scale(0.9 1)">A3</text>
<text class="t" transform="translate(687 376) scale(0.9 1)">A4</text>
<path d="M521,436.5 L565,436.5" stroke="#4e8050" stroke-width="1.2"/>
<path d="M566,432.2 L574.5,436.5 L566,440.8" fill="none" stroke="#b04646" stroke-width="2"/>
<text class="t" transform="translate(555 429) scale(0.9 1)">+5V</text>
<path class="r" d="M848.5,229.5 L853.5,222.5 L858.5,229.5" stroke-width="1.8"/>
<path class="r" d="M848.5,233.5 L853.5,226.5 L858.5,233.5" stroke-width="1.8"/>
<text class="t" transform="translate(846 244) rotate(-90) scale(0.9 1)">+12V</text>
<path class="g" d="M853.5,227.5 L853.5,271.5"/>
<path class="g" d="M792.5,271.5 L940.5,271.5"/>
<circle class="gf" cx="809" cy="271" r="2"/>
<circle class="gf" cx="853.3" cy="271" r="2"/>
<circle class="gf" cx="906" cy="271" r="2"/>
<path class="g" d="M792.5,359.5 L940.5,359.5"/>
<circle class="gf" cx="792" cy="359" r="2"/>
<circle class="gf" cx="809.5" cy="359" r="2"/>
<circle class="gf" cx="906" cy="359" r="2"/>
<circle class="gf" cx="940.5" cy="359" r="2"/>
<path class="g" d="M792.5,445.5 L940.5,445.5"/>
<circle class="gf" cx="809.5" cy="445.6" r="2"/>
<circle class="gf" cx="853.5" cy="445.6" r="2"/>
<circle class="gf" cx="906" cy="445.6" r="2"/>
<path class="g" d="M853.5,445.5 L853.5,471.5"/>
<path class="r" d="M846.5,471.5 L860.5,471.5" stroke-width="2"/>
<text class="t" transform="translate(853.5 480) scale(0.9 1)" text-anchor="middle">GND</text>
<path class="g" d="M809.5,271.5 L809.5,445.5"/>
<path class="g" d="M906.5,271.5 L906.5,445.5"/>
<path class="rf" d="M803.5,318.6 L814.5,318.6 L809,310.6 Z"/>
<path class="r" d="M803.5,310.5 L814.5,310.5" stroke-width="1.4"/>
<text class="t" transform="translate(806 306.6) rotate(-90) scale(0.9 1)">D1</text>
<path class="rf" d="M900.5,318.6 L911.5,318.6 L906,310.6 Z"/>
<path class="r" d="M900.5,310.5 L911.5,310.5" stroke-width="1.4"/>
<text class="t" transform="translate(903 306.6) rotate(-90) scale(0.9 1)">D2</text>
<path class="rf" d="M804.0,397.6 L815.0,397.6 L809.5,389.6 Z"/>
<path class="r" d="M804.5,389.5 L815.5,389.5" stroke-width="1.4"/>
<text class="t" transform="translate(806.5 385.6) rotate(-90) scale(0.9 1)">D3</text>
<path class="rf" d="M900.5,397.6 L911.5,397.6 L906,389.6 Z"/>
<path class="r" d="M900.5,389.5 L911.5,389.5" stroke-width="1.4"/>
<text class="t" transform="translate(903 385.6) rotate(-90) scale(0.9 1)">D4</text>
<rect class="rf" x="782.5" y="303" width="3.5" height="20"/>
<path class="g" d="M765.5,313.5 L782.5,313.5"/>
<path class="r" d="M786.5,307.5 L792.5,301.5 L792.5,283.5"/>
<path class="r" d="M786.5,319.5 L792.5,325.5 L792.5,343.5"/>
<rect class="rf" x="930.5" y="303" width="3.5" height="20"/>
<path class="g" d="M918.5,313.5 L930.5,313.5"/>
<path class="r" d="M930.5,307.5 L940.5,301.5 L940.5,283.5"/>
<path class="r" d="M930.5,319.5 L940.5,325.5 L940.5,343.5"/>
<rect class="rf" x="782.5" y="402" width="3.5" height="19"/>
<path class="g" d="M765.5,411.5 L782.5,411.5"/>
<path class="r" d="M786.5,406.5 L792.5,400.5 L792.5,382.5"/>
<path class="r" d="M786.5,417.5 L792.5,423.5 L792.5,441.5"/>
<rect class="rf" x="930.5" y="410" width="3.5" height="18"/>
<path class="g" d="M915.5,419.5 L930.5,419.5"/>
<path class="r" d="M930.5,414.5 L940.5,408.5 L940.5,390.5"/>
<path class="r" d="M930.5,424.5 L940.5,430.5 L940.5,448.5"/>
<path class="g" d="M792.5,271.5 L792.5,445.5"/>
<path class="g" d="M940.5,271.5 L940.5,445.5"/>
<text class="t" transform="translate(748 288) scale(0.9 1)">T3</text>
<text class="t" transform="translate(896 288) scale(0.9 1)">T4</text>
<text class="t" transform="translate(748 386) scale(0.9 1)">T1</text>
<text class="t" transform="translate(899 393) scale(0.9 1)">T2</text>
<text class="t" transform="translate(756 306) scale(0.9 1)">A1</text>
<text class="t" transform="translate(916 307) scale(0.9 1)">A2</text>
<text class="t" transform="translate(755 411) scale(0.9 1)">A3</text>
<text class="t" transform="translate(915 411) scale(0.9 1)">A4</text>
<circle cx="848.2" cy="358.5" r="4" style="fill:#1a0505;stroke:#b84848;stroke-width:1.5"/>
<circle cx="874.8" cy="358.5" r="4.3" style="fill:#1a0505;stroke:#b84848;stroke-width:1.5"/>
<text class="t" transform="translate(849 361.5) scale(0.9 1)">X1X2</text>
<path class="r" d="M867.5,359.5 L870.5,359.5"/>
<path d="M101,196.5 L964,196.5" stroke="#b8b8b8" stroke-width="1" stroke-dasharray="2,1"/>
<path d="M507.5,86 L507.5,520" stroke="#b8b8b8" stroke-width="1" stroke-dasharray="2,1"/>
<!--/S-->
</g>
</svg>


<!-- right scrollbar + panel -->
<div class="a" style="left:964px;top:86px;width:12px;height:434px;background:#f0f0f0"></div>
<div class="a" style="left:976px;top:70px;width:48px;height:462px;background:#efefef;border-left:1px solid #dcdcdc;border-bottom:1px solid #d0d0d0"></div>


<!-- right scroll arrows, design link -->
<svg class="a" style="left:940px;top:70px" width="84" height="470" viewBox="940 70 84 470">
<path d="M966,77 L974,77 L970,81.5 Z" fill="#111"/>
<path d="M966.5,97 L970.5,93.5 L974.5,97 Z" fill="#a8a8a8"/>
<path d="M967,512 L975,512 L971,516 Z" fill="#909090"/>
<path d="M955,523 L959,526 L955,529 Z" fill="#808080"/>
<path d="M979,73 L1024,73" stroke="#bcbcbc" stroke-dasharray="1,2"/>
<path d="M979.5,76 L979.5,532" stroke="#f8f8f8"/>
<text x="980" y="89" font-size="9.5" fill="#c8507a" font-family="Liberation Sans" font-weight="bold" letter-spacing="-0.6">design</text>
<text x="994" y="95.5" font-size="9" fill="#5a98c0" font-family="Liberation Sans" font-weight="bold" letter-spacing="-0.5">link</text>
<path d="M1015,85 L1023,85 L1019,89 Z" fill="#111"/>
</svg>
<div class="a" style="left:976px;top:532px;width:48px;height:1px;background:#d4d4d4"></div>
<svg class="a" style="left:100px;top:520px" width="12" height="12" viewBox="100 520 12 12"><path d="M108,522.5 L104.5,525.5 L108,528.5 Z" fill="#a0a0a0"/></svg>
<div class="a" style="left:992px;top:534px;width:1px;height:19px;background:#dcdcdc"></div>
<svg class="a" style="left:992px;top:533px" width="20" height="19" viewBox="992 533 20 19">
<defs><radialGradient id="mg" cx="0.4" cy="0.35" r="0.7"><stop offset="0" stop-color="#ff9cff"/><stop offset="0.4" stop-color="#f020f0"/><stop offset="1" stop-color="#b000b8"/></radialGradient></defs>
<circle cx="1000.5" cy="542.5" r="6" fill="url(#mg)"/>
</svg>
<div class="a" style="left:1010px;top:534px;width:1px;height:19px;background:#e4e4e4"></div>

<div id="task" class="a"></div>
<svg class="a" style="left:0;top:548px" width="1024" height="28" viewBox="0 548 1024 28">
<defs>
<radialGradient id="orb" cx="0.5" cy="0.45" r="0.6"><stop offset="0" stop-color="#7ab8e0"/><stop offset="0.6" stop-color="#2a78b8"/><stop offset="0.85" stop-color="#1a5a98"/><stop offset="1" stop-color="#6ac8f0"/></radialGradient>
<linearGradient id="tbtn" x1="0" y1="0" x2="0" y2="1"><stop offset="0" stop-color="#d4e2f0"/><stop offset="1" stop-color="#a8bfd6"/></linearGradient>
<linearGradient id="tbr" x1="0" y1="0" x2="0" y2="1"><stop offset="0" stop-color="#f0c8cc"/><stop offset="1" stop-color="#e07884"/></linearGradient>
</defs>
<rect x="0" y="554" width="43" height="22" fill="#9fb0c4"/><ellipse cx="20.3" cy="561" rx="16" ry="14" fill="#e8f4ff" opacity="0.35"/>
<circle cx="20.3" cy="562.5" r="13.2" fill="url(#orb)" stroke="#5a7090" stroke-width="0.7"/>
<ellipse cx="20.3" cy="557" rx="9" ry="5.5" fill="#ffffff" opacity="0.25"/>
<path d="M14.5,556.5 Q17,555 19.5,556.8 L19,561.5 Q16.5,560 14,561.5 Z" fill="#e8702a"/>
<path d="M20.5,557 Q23,555.5 26,557.5 L25.5,562 Q23,560.5 20,562 Z" fill="#88c040"/>
<path d="M14,562.5 Q16.5,561 19,562.5 L18.5,567 Q16,565.5 13.5,567 Z" fill="#48a8e8"/>
<path d="M20,563 Q22.5,561.5 25.5,563 L25,567.5 Q22.5,566 19.5,567.5 Z" fill="#f0c030"/>
<rect x="45.5" y="554.5" width="28" height="21" rx="2" fill="url(#tbtn)" stroke="#6a7f96"/>
<rect x="55" y="560" width="10" height="9" fill="#e8d040" stroke="#7a9a50" stroke-width="0.8"/><rect x="57" y="564" width="6" height="5" fill="#4a90c0"/>
<rect x="79.5" y="554.5" width="31" height="21" rx="2" fill="url(#tbr)" stroke="#8a6a76"/>
<circle cx="95" cy="565" r="5" fill="#e03a2a"/><path d="M95,565 L99.5,562.5 A5,5 0 0 1 95,570 Z" fill="#f8c820"/><path d="M95,565 L95,570 A5,5 0 0 1 90.5,562.5 Z" fill="#30a040"/><circle cx="95" cy="565" r="2.2" fill="#3a70d0" stroke="#fff" stroke-width="0.8"/>
<rect x="114.5" y="554.5" width="31" height="21" rx="2" fill="url(#tbtn)" stroke="#6a7f96"/>
<rect x="123" y="559" width="13" height="12" fill="#8ab8e8" stroke="#5a88b8" stroke-width="0.6"/><circle cx="129.5" cy="565" r="4.5" fill="#f09a20"/><path d="M128,562.5 L132,565 L128,567.5 Z" fill="#fff"/>
<rect x="148.5" y="554.5" width="31" height="21" rx="2" fill="url(#tbtn)" stroke="#6a7f96"/>
<rect x="158" y="559" width="12" height="9" fill="#3a70b0" stroke="#1a4070" stroke-width="0.6"/><path d="M160,562 L166,562 M160,565 L168,565" stroke="#a8e0a8"/><circle cx="164" cy="570" r="2" fill="#e8f0f8"/>
<rect x="182.5" y="554.5" width="26" height="21" rx="2" fill="#e4eaf2" stroke="#6a7f96"/>
<path d="M191,569 Q192,563 196,561 Q198,558 199,559 Q198,562 200,564 Q201,567 199,569 Z" fill="#e03030"/><path d="M193,570 L201,570" stroke="#f0a0a0"/>
<rect x="211" y="554" width="2" height="22" fill="#c0d0e0"/>
<path d="M890,567 L893.5,563.5 L897,567 Z" fill="#fff"/>
<g fill="#fff" stroke="#555" stroke-width="0.5"><rect x="907" y="562" width="3" height="5"/><path d="M910,562 L914,558.5 L914,570.5 L910,567 Z"/></g>
<path d="M916,561 Q918,564.5 916,568 M918,559.5 Q921,564.5 918,569.5" fill="none" stroke="#eee" stroke-width="0.8"/>
<rect x="925" y="558" width="7" height="12" fill="#fff" stroke="#333" stroke-width="0.8"/><rect x="930" y="560" width="5" height="5" fill="#eee" stroke="#333" stroke-width="0.6"/>
<rect x="942" y="558" width="5" height="5" fill="#eee" stroke="#333" stroke-width="0.6"/><rect x="946" y="562" width="8" height="6" fill="#ddd" stroke="#333" stroke-width="0.7"/><path d="M945,570 L952,570" stroke="#eee"/>
<text x="970" y="570" font-size="9" fill="#f4f6f8" font-family="Liberation Sans">8:44 PM</text>
<rect x="1013" y="554" width="11" height="22" fill="#6a7f96" opacity="0.6"/>
<path d="M1013.5,554 L1013.5,576" stroke="#a8b8c8"/>
</svg>

</body></html>
